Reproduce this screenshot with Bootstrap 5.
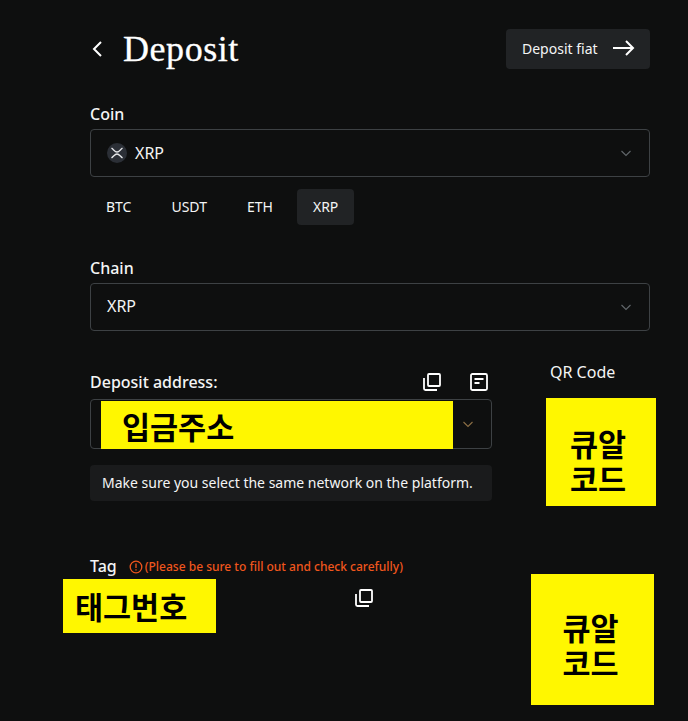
<!DOCTYPE html>
<html lang="ko">
<head>
<meta charset="utf-8">
<title>Deposit</title>
<link rel="stylesheet" href="https://cdn.jsdelivr.net/npm/bootstrap@5.3.0/dist/css/bootstrap.min.css">
<style>
html,body{height:100%}
body{background:#0e0f0f;color:#f4f5f5;font-family:"Noto Sans","Noto Sans CJK KR",sans-serif;font-size:14px;overflow:hidden}
.pg{width:688px;height:721px;padding:29px 38px 0 90px;overflow:hidden}
.ttl{font-family:"Liberation Serif",serif;font-size:36px;line-height:40px;font-weight:400;margin:0 0 0 19px;letter-spacing:.55px;color:#fff;-webkit-text-stroke:.3px #fff}
.back{width:14px;height:20px;display:block}
.fiat{width:144px;height:40px;background:#212325;border:0;border-radius:4px;color:#f4f5f5;font-size:14px;padding:0 15px 2px 16px}
.fld{font-size:16px;line-height:22px;font-weight:500;color:#f4f5f5}
.sel{height:48px;border:1px solid #3d4144;border-radius:4px;padding:0 18px 0 16px;font-size:16px;color:#f4f5f5}
.coin{width:20px;height:20px;margin-right:8px;display:block}
.chev{width:10px;height:7px;display:block}
.pill{height:36px;line-height:36px;text-align:center;font-size:14px;border-radius:4px;color:#f4f5f5;padding:0 16px}
.pill.on{background:#212325}
.lcol{width:402px;flex:none}
.ic{width:18px;height:18px;display:block}
.addr{height:50px;border:1px solid #3d4144;border-radius:4px;padding:0 0 0 10px}
.ybox{background:#fff700;color:#000;font-family:"Liberation Sans","Noto Sans CJK KR",sans-serif;font-weight:700;font-size:30.5px;line-height:35px}
.y-addr{width:352px;height:48px;margin:1px 0 -1px;padding-left:21px;line-height:55px}
.note{height:36px;background:#1a1b1c;border-radius:4px;line-height:36px;padding-left:12px;font-size:14px;margin-top:16px;color:#f4f5f5;white-space:nowrap}
.rcol{width:110px;margin-left:54px;flex:none}
.qrt{font-size:16px;line-height:22px;margin:0 0 0 4px;color:#f4f5f5;font-weight:400;white-space:nowrap}
.q1{width:110px;height:108px;margin-top:15px;padding:30px 6px 0 0;text-align:center}
.warn{font-size:12px;font-weight:500;color:#f0561d;margin-left:12px;padding-top:2px}
.warn svg{width:14px;height:14px;margin-right:2px;display:block}
.y-tag{width:153px;height:54px;margin:2px 0 0 -27px;padding-left:12px;line-height:59px}
.tagc{width:402px;flex:none}
.q2{width:123px;height:131px;margin-left:39px;padding:38px 4px 0 0;text-align:center;flex:none}
</style>
</head>
<body>
<div class="pg">
  <div class="d-flex align-items-center justify-content-between">
    <div class="d-flex align-items-center">
      <svg class="back" viewBox="0 0 14 20" fill="none" stroke="#fff" stroke-width="2"><path d="M11 3 4 10l7 7"/></svg>
      <h1 class="ttl">Deposit</h1>
    </div>
    <button class="fiat d-flex align-items-center justify-content-between" type="button">Deposit fiat
      <svg width="22" height="16" viewBox="0 0 22 16" fill="none" stroke="#fff" stroke-width="2"><path d="M0 8h20M13 1l7 7-7 7"/></svg>
    </button>
  </div>

  <div class="fld" style="margin-top:34px">Coin</div>
  <div class="sel d-flex align-items-center justify-content-between mt-1">
    <div class="d-flex align-items-center">
      <svg class="coin" viewBox="0 0 20 20"><circle cx="10" cy="10" r="10" fill="#2b2f36"/><path d="M4.500 5C7 7 8 9 10 9s3-2 5.500-4M4.500 15C7 13 8 11 10 11s3 2 5.500 4" fill="none" stroke="#e6e8ea" stroke-width="1.300"/></svg>
      <span>XRP</span>
    </div>
    <svg class="chev" viewBox="0 0 10 7" fill="none" stroke="#62676b" stroke-width="1.100"><path d="M.5 1 5 5.500 9.500 1"/></svg>
  </div>
  <div class="d-flex gap-2 mt-2 pt-1">
    <div class="pill">BTC</div>
    <div class="pill">USDT</div>
    <div class="pill">ETH</div>
    <div class="pill on">XRP</div>
  </div>

  <div class="fld" style="margin-top:32px">Chain</div>
  <div class="sel d-flex align-items-center justify-content-between mt-1">
    <span style="padding-bottom:2px">XRP</span>
    <svg class="chev" viewBox="0 0 10 7" fill="none" stroke="#62676b" stroke-width="1.100"><path d="M.5 1 5 5.500 9.500 1"/></svg>
  </div>

  <div class="d-flex" style="margin-top:30px">
    <div class="lcol">
      <div class="d-flex align-items-center" style="height:35px;padding-top:7px">
        <span class="fld">Deposit address:</span>
        <svg class="ic" style="margin-left:205px" viewBox="0 0 18 18" fill="none" stroke="#fff" stroke-width="1.800"><path d="M1 5v10.500A1.500 1.500 0 0 0 2.500 17H14"/><rect x="5" y="1" width="12" height="12" rx="1"/></svg>
        <svg class="ic" style="margin-left:29px" viewBox="0 0 18 18" fill="none" stroke="#fff" stroke-width="1.800"><rect x="1" y="1" width="16" height="16" rx="1.500"/><path d="M4.500 6h9M4.500 10h5"/></svg>
      </div>
      <div class="addr d-flex align-items-center justify-content-between" style="margin-top:3px">
        <div class="ybox y-addr">입금주소</div>
        <svg class="chev" style="margin-right:18px" viewBox="0 0 10 7" fill="none" stroke="#8c6f45" stroke-width="1.100"><path d="M.5 1 5 5.500 9.500 1"/></svg>
      </div>
      <div class="note">Make sure you select the same network on the platform.</div>
    </div>
    <div class="rcol">
      <div class="qrt">QR Code</div>
      <div class="ybox q1">큐알<br>코드</div>
    </div>
  </div>

  <div class="d-flex">
    <div class="tagc" style="padding-top:49px">
      <div class="d-flex align-items-center" style="height:22px">
        <span class="fld">Tag</span>
        <span class="warn d-flex align-items-center">
          <svg viewBox="0 0 14 14" fill="none" stroke="#f0561d" stroke-width="1.300"><circle cx="7" cy="7" r="5.800"/><path d="M7 3.500v4.500M7 9.300v1.300"/></svg>
          (Please be sure to fill out and check carefully)
        </span>
      </div>
      <div class="d-flex">
        <div class="ybox y-tag">태그번호</div>
        <svg class="ic" style="margin:12px 0 0 139px" viewBox="0 0 18 18" fill="none" stroke="#fff" stroke-width="1.800"><path d="M1 5v10.500A1.500 1.500 0 0 0 2.500 17H14"/><rect x="5" y="1" width="12" height="12" rx="1"/></svg>
      </div>
    </div>
    <div class="ybox q2" style="margin-top:68px">큐알<br>코드</div>
  </div>
</div>
</body>
</html>
